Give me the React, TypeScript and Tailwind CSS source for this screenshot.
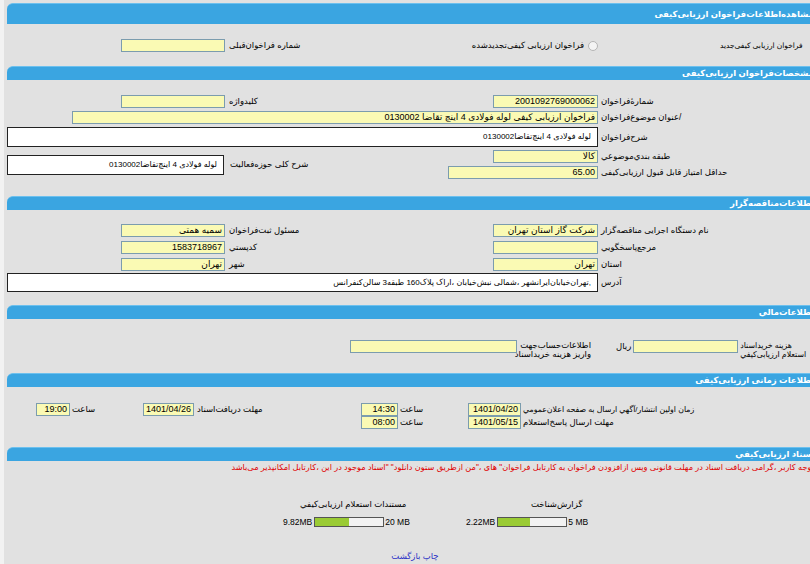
import React from 'react';

// ستون‌های جدول فرم (از چپ به راست)
const COLS = 'grid grid-cols-[222px_216px_157px_1fr]';

const Header = ({ title, tall = false }: { title: string; tall?: boolean }) => (
  <div
    dir="rtl"
    className={`ml-[3px] bg-[#3aa5e1] border-t border-[#6cc0ee] rounded-tl-[6px] text-white font-bold text-[8.5px] pr-[2px] whitespace-nowrap overflow-hidden ${
      tall ? 'h-[21px] leading-[20px]' : 'h-[14px] leading-[13px]'
    }`}
  >
    {title}
  </div>
);

const Field = ({ value = '', className = '' }: { value?: string; className?: string }) => (
  <div
    dir="rtl"
    className={`h-[13px] bg-[#fafab4] border border-[#7b9cae] text-[9px] leading-[11px] px-[2px] text-black whitespace-nowrap overflow-hidden ${className}`}
  >
    {value}
  </div>
);

const Box = ({ value, className = '' }: { value: string; className?: string }) => (
  <div
    dir="rtl"
    className={`bg-white border border-[#222] text-[8px] px-[6px] text-black whitespace-nowrap overflow-hidden ${className}`}
  >
    {value}
  </div>
);

const Label = ({
  children,
  className = '',
  lh = 'leading-[13px]',
  size = 'text-[8.5px]',
}: {
  children: React.ReactNode;
  className?: string;
  lh?: string;
  size?: string;
}) => (
  <span dir="rtl" className={`${size} ${lh} text-black whitespace-nowrap ${className}`}>
    {children}
  </span>
);

const Bar = ({ used, total, pct }: { used: string; total: string; pct: number }) => (
  <div className="flex items-center h-[12px] text-[8.5px] leading-[12px] text-black">
    <span>{used}</span>
    <div className="ml-[2px] w-[70px] h-[10px] border border-[#555] bg-[#f2f2f2]">
      <div className="h-full bg-[#9acb34]" style={{ width: `${pct}%` }} />
    </div>
    <span className="ml-[1px]">{total}</span>
  </div>
);

export default function App() {
  return (
    <div className="w-[810px] h-[564px] overflow-hidden bg-[#f2f2f2] font-['Liberation_Sans','DejaVu_Sans',sans-serif]">
      <div className="ml-[4px] w-[812px] h-full bg-[#e1e1e1] pt-[3px]">
        {/* مشاهده اطلاعات */}
        <Header title="مشاهده‌اطلاعات‌فراخوان ارزیابی‌کیفی" tall />
        <div className={`${COLS} pt-[15px] pb-[14px] items-center`}>
          <Field className="justify-self-end w-[104px] mr-px" />
          <Label className="justify-self-start pl-[3px]">شماره فراخوان‌قبلی</Label>
          <div className="flex items-center justify-end pr-px">
            <Label>فراخوان ارزیابی کیفی‌تجدیدشده</Label>
            <span className="ml-[4px] w-[10px] h-[10px] rounded-full border border-[#b5b5b5] bg-[#f4f4f4]" />
          </div>
          <Label size="text-[7.5px]" className="justify-self-start pl-[121px]">
            فراخوان ارزیابی کیفی‌جدید
          </Label>
        </div>

        {/* مشخصات فراخوان */}
        <Header title="مشخصات‌فراخوان ارزیابی‌کیفی" />
        <div className={`${COLS} gap-y-[3px] pt-[15px] pb-[17px] items-center`}>
          <Field className="justify-self-end w-[104px] mr-px" />
          <Label className="justify-self-start pl-[3px]">کلیدواژه</Label>
          <Field value="2001092769000062" className="justify-self-end w-[105px] mr-px" />
          <Label className="justify-self-start pl-[2px]">شمارهٔ‌فراخوان</Label>

          <Field
            value="فراخوان ارزیابی کیفی لوله فولادی 4 اینچ تقاضا 0130002"
            className="col-span-3 justify-self-end w-[526px] mr-px"
          />
          <Label className="justify-self-start pl-[2px]">/عنوان موضوع‌فراخوان</Label>

          <Box
            value="لوله فولادی 4 اینچ‌تقاضا0130002"
            className="col-span-3 ml-[3px] mr-px h-[20px] leading-[18px]"
          />
          <Label className="justify-self-start pl-[2px]">شرح‌فراخوان</Label>

          <Box
            value="لوله فولادی 4 اینچ‌تقاضا0130002"
            className="row-span-2 ml-[3px] mr-[2px] h-[20px] leading-[18px]"
          />
          <Label className="row-span-2 justify-self-start pl-[4px]">شرح کلی حوزه‌فعالیت</Label>
          <Field value="کالا" className="justify-self-end w-[105px] mr-px" />
          <Label className="justify-self-start pl-[2px]">طبقه بندي‌موضوعي</Label>

          <Field value="65.00" className="col-start-3 justify-self-end w-[150px] mr-px" />
          <Label className="justify-self-start pl-[2px]">حداقل امتیاز قابل قبول ارزیابی‌کیفی</Label>
        </div>

        {/* اطلاعات مناقصه گزار */}
        <Header title="اطلاعات‌مناقصه‌گزار" />
        <div className={`${COLS} gap-y-[4px] pt-[14px] pb-[13px] items-center`}>
          <Field value="سمیه همتی" className="justify-self-end w-[104px] mr-px" />
          <Label className="justify-self-start pl-[3px]">مسئول ثبت‌فراخوان</Label>
          <Field value="شرکت گاز استان تهران" className="justify-self-end w-[105px] mr-px" />
          <Label className="justify-self-start pl-[2px]">نام دستگاه اجرایی مناقصه‌گزار</Label>

          <Field value="1583718967" className="justify-self-end w-[104px] mr-px" />
          <Label className="justify-self-start pl-[3px]">کدپستي</Label>
          <Field className="justify-self-end w-[105px] mr-px" />
          <Label className="justify-self-start pl-[2px]">مرجع‌پاسخگويي</Label>

          <Field value="تهران" className="justify-self-end w-[104px] mr-px" />
          <Label className="justify-self-start pl-[3px]">شهر</Label>
          <Field value="تهران" className="justify-self-end w-[105px] mr-px" />
          <Label className="justify-self-start pl-[2px]">استان</Label>

          <Box
            value=",تهران‌خیابان‌ایرانشهر ،شمالی نبش‌خیابان ،اراک پلاک160 طبقه3 سالن‌کنفرانس"
            className="col-span-3 ml-[3px] mr-px -mt-[2px] h-[19px] leading-[17px]"
          />
          <Label className="justify-self-start pl-[2px] -mt-[2px]">آدرس</Label>
        </div>

        {/* اطلاعات مالی */}
        <Header title="اطلاعات‌مالي" />
        <div className="flex items-start pt-[21px] pb-[14px]">
          <Field className="ml-[346px] w-[167px]" />
          <Label lh="leading-[9px]" className="ml-[2px] w-[72px] pt-[1px] text-right">
            اطلاعات‌حساب‌جهت
            <br />
            واریز هزینه خریداسناد
          </Label>
          <Label lh="leading-[9px]" className="ml-[25px] mt-[2px]">
            ریال
          </Label>
          <Field className="ml-[2px] w-[105px]" />
          <Label lh="leading-[9px]" size="text-[7.8px]" className="ml-[2px] pt-[1px] text-left">
            هزینه خریداسناد
            <br />
            استعلام ارزیابی‌کیفي
          </Label>
        </div>

        {/* اطلاعات زمانی */}
        <Header title="اطلاعات زمانی ارزیابی‌کیفی" />
        <div className="pt-[16px] pb-[18px]">
          <div className="flex items-center">
            <div className="w-[139px] flex items-center pl-[32px]">
              <Field value="19:00" className="w-[34px]" />
              <Label className="ml-[2px]">ساعت</Label>
            </div>
            <div className="w-[218px] flex items-center">
              <Field value="1401/04/26" className="w-[51px]" />
              <Label className="ml-[3px]">مهلت دریافت‌اسناد</Label>
            </div>
            <div className="w-[107px] flex items-center">
              <Field value="14:30" className="w-[37px]" />
              <Label className="ml-[2px]">ساعت</Label>
            </div>
            <div className="flex items-center">
              <Field value="1401/04/20" className="w-[53px]" />
              <Label size="text-[7.8px]" className="ml-[2px]">
                زمان اولین انتشار/آگهي ارسال به صفحه اعلان‌عمومي
              </Label>
            </div>
          </div>
          <div className="flex items-center">
            <div className="ml-[357px] w-[107px] flex items-center">
              <Field value="08:00" className="w-[37px]" />
              <Label className="ml-[2px]">ساعت</Label>
            </div>
            <div className="flex items-center">
              <Field value="1401/05/15" className="w-[53px]" />
              <Label className="ml-[2px]">مهلت ارسال پاسخ‌استعلام</Label>
            </div>
          </div>
        </div>

        {/* اسناد */}
        <Header title="اسناد ارزیابی‌کیفي" />
        <div className="pt-[1px]">
          <div dir="rtl" className="h-[12px] text-[8.2px] leading-[12px] text-[#e00000] whitespace-nowrap pr-[2px]">
            توجه کاربر ،گرامی دریافت اسناد در مهلت قانونی وپس ازافزودن فراخوان به کارتابل فراخوان" های ،"من ازطریق ستون دانلود" "اسناد موجود در این ،کارتابل امکانپذیر می‌باشد
          </div>
          <div className="flex items-center mt-[24px] h-[12px] leading-[12px]">
            <div className="w-[527px] pl-[296px] flex items-center">
              <Label lh="leading-[12px]">مستندات استعلام ارزیابی‌کیفي</Label>
            </div>
            <Label lh="leading-[12px]">گزارش‌شناخت</Label>
          </div>
          <div className="flex items-center mt-[6px] h-[12px] leading-[12px]">
            <div className="w-[462px] pl-[279px]">
              <Bar used="9.82MB" total="20 MB" pct={50} />
            </div>
            <Bar used="2.22MB" total="5 MB" pct={47} />
          </div>
          <div dir="rtl" className="mt-[22px] h-[12px] text-center text-[8.5px] leading-[12px] text-[#2b31c6] pl-[10px]">
            <span>چاپ</span> <span>بازگشت</span>
          </div>
        </div>
      </div>
    </div>
  );
}
